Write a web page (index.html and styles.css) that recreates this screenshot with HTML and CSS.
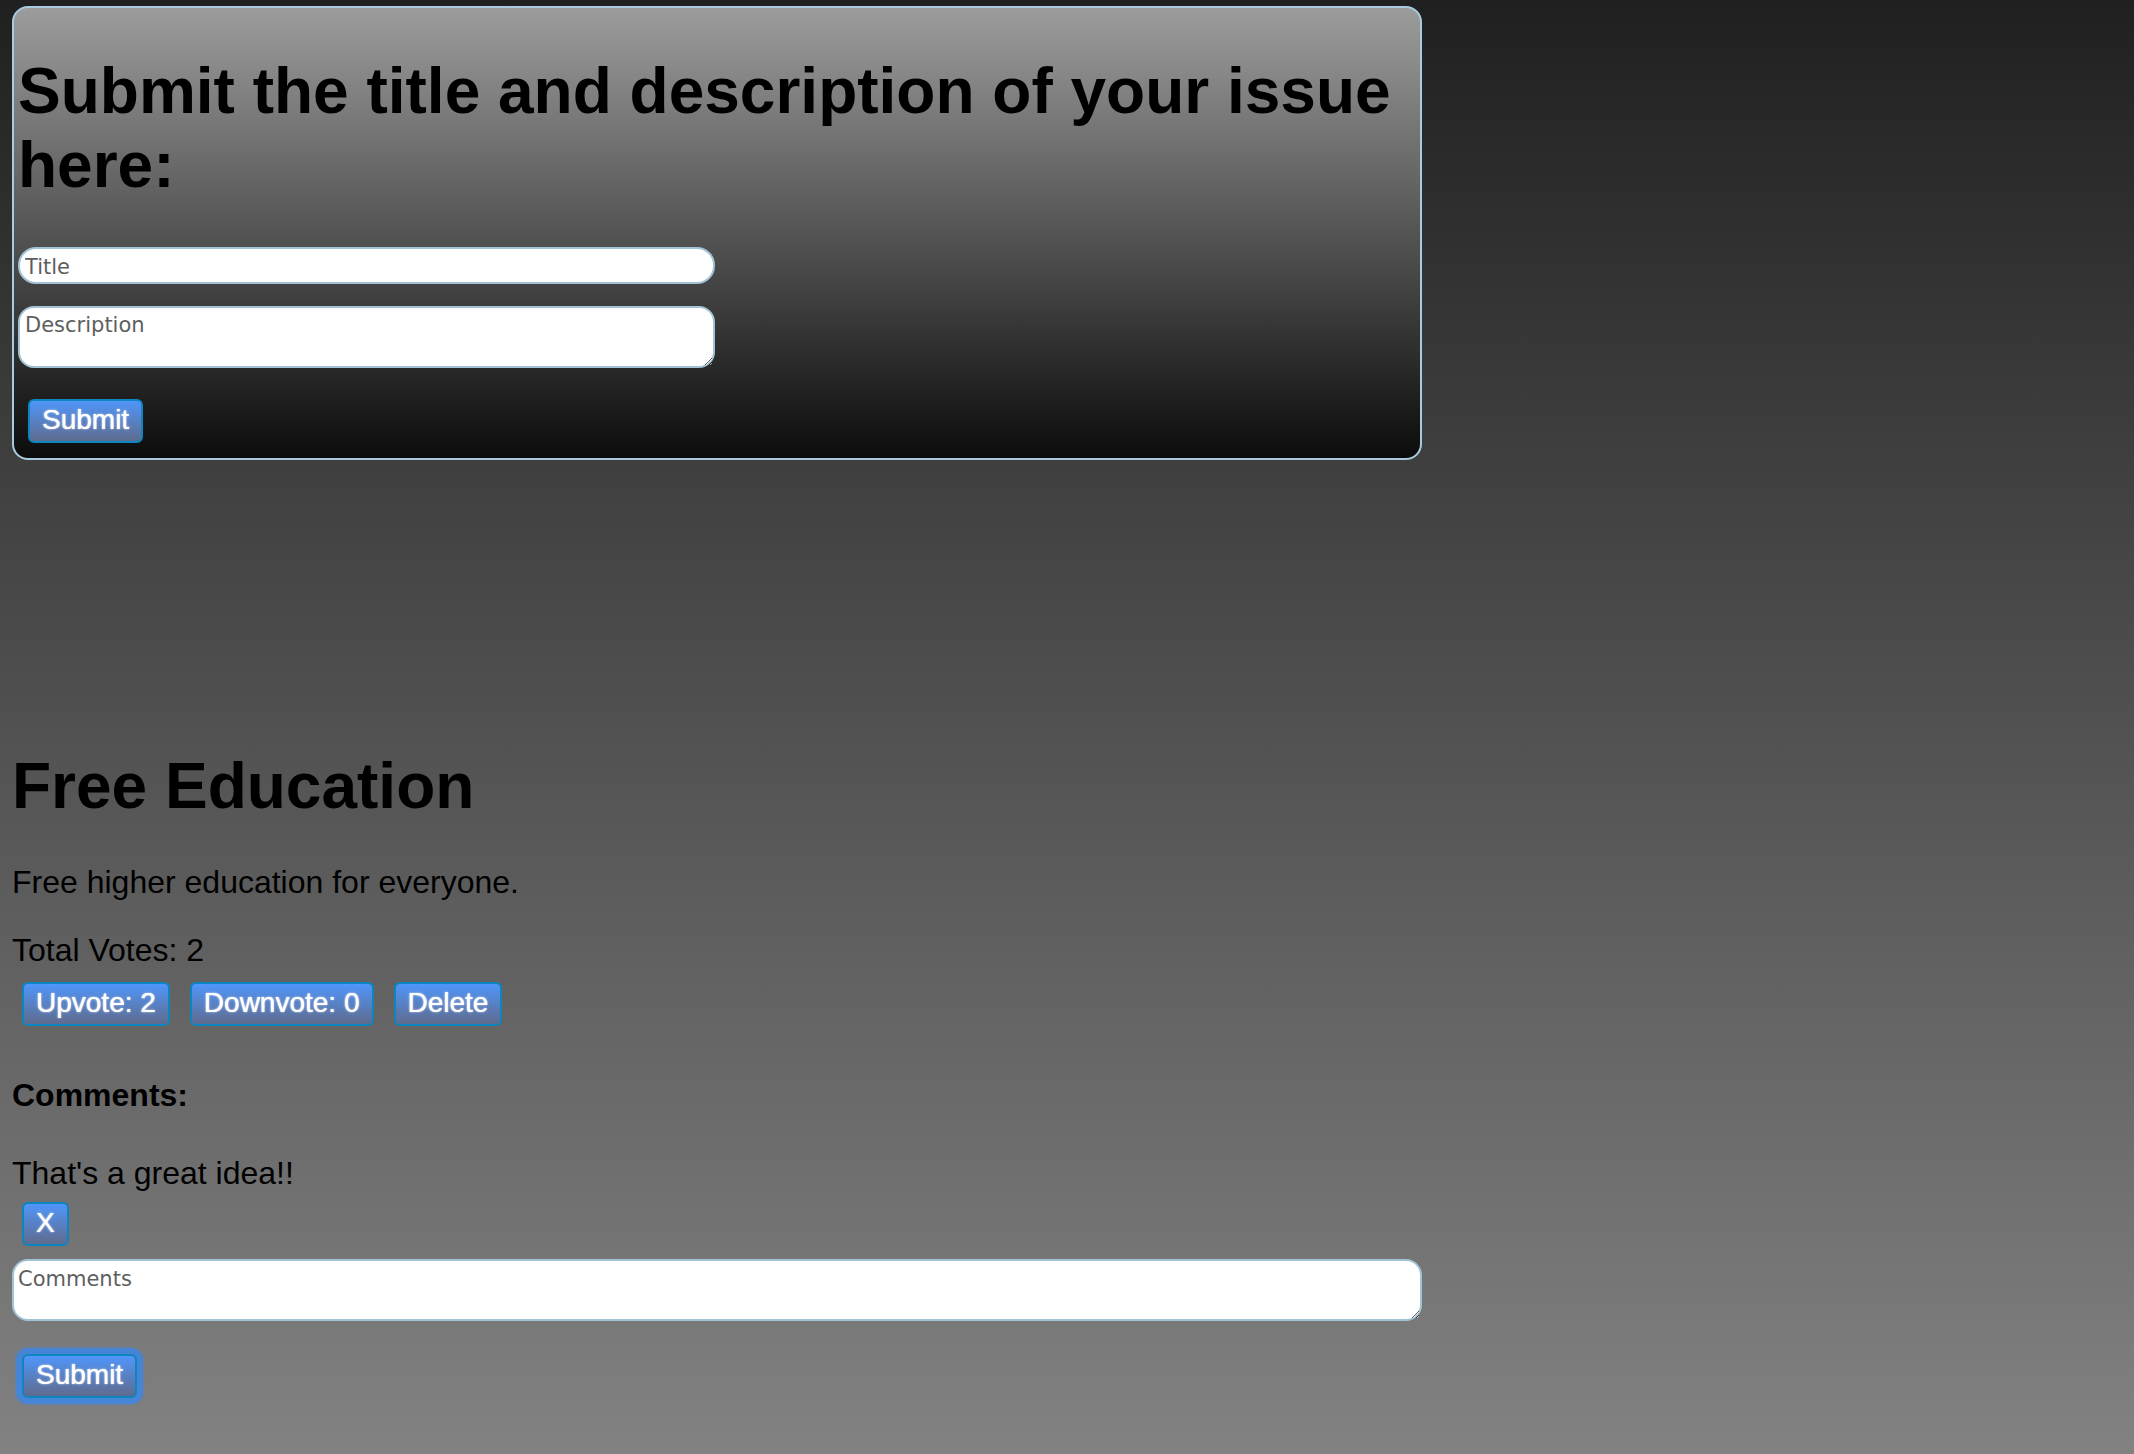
FILE: index.html
```html
<!DOCTYPE html>
<html lang="en">
<head>
<meta charset="utf-8">
<title>Issues</title>
<link rel="stylesheet" href="styles.css">
</head>
<body>
<div class="page">
  <form class="box">
    <h1 class="box-title">Submit the title and description of your issue here:</h1>
    <input class="field field-title" type="text" placeholder="Title">
    <textarea class="field field-desc" placeholder="Description"></textarea>
    <button type="button" class="btn btn-box">Submit</button>
  </form>

  <section class="issue">
    <h1 class="issue-title">Free Education</h1>
    <p class="issue-desc">Free higher education for everyone.</p>
    <p class="votes">Total Votes: 2</p>
    <div class="actions">
      <button type="button" class="btn">Upvote: 2</button>
      <button type="button" class="btn">Downvote: 0</button>
      <button type="button" class="btn">Delete</button>
    </div>
    <h4 class="comments-head">Comments:</h4>
    <p class="comment">That's a great idea!!</p>
    <button type="button" class="btn btn-x">X</button>
    <textarea class="field comment-field" placeholder="Comments"></textarea>
    <button type="button" class="btn btn-focus">Submit</button>
  </section>
</div>
</body>
</html>
```

FILE: styles.css
```css
html {
  height: 100%;
  background: linear-gradient(to bottom, #202020 0%, #828282 100%);
}

body {
  margin: 0;
  font-family: "Liberation Sans", Arial, Helvetica, sans-serif;
  color: #000;
}

.page {
  padding: 0 0 0 12px;
  display: flow-root;
}

/* ---------- top form box ---------- */
.box {
  box-sizing: border-box;
  width: 1410px;
  margin: 6px 0 0 0;
  padding: 3px 4px 15px 4px;
  border: 2px solid #a9cbe0;
  border-radius: 16px;
  background: linear-gradient(to bottom, #9c9c9c 0%, #0c0c0c 100%);
  display: flow-root;
}

.box-title {
  font-size: 64px;
  font-weight: bold;
  line-height: normal;
  margin: 43px 0 45px 0;
}

.field {
  display: block;
  box-sizing: border-box;
  margin: 0;
  border: 2px solid #a2c3d6;
  background: #fff;
  font-family: "DejaVu Sans", Verdana, sans-serif;
  font-size: 21px;
  color: #000;
  outline: none;
}

.field::placeholder {
  color: #5e5e5e;
  opacity: 1;
}

.field-title {
  width: 697px;
  height: 37px;
  padding: 2px 5px 0 5px;
  border-radius: 18px;
}

.field-desc {
  width: 697px;
  height: 62px;
  margin-top: 22px;
  padding: 5px 5px 4px 5px;
  border-radius: 16px;
  resize: both;
}

/* ---------- buttons ---------- */
.btn {
  display: block;
  box-sizing: border-box;
  height: 44px;
  margin: 0;
  padding: 3px 12px 5px 12px;
  border: 2px solid #0b86c1;
  border-radius: 6px;
  background: linear-gradient(to bottom, #5096fa 0%, #5f6b8e 100%);
  color: #fff;
  font-family: "Liberation Sans", Arial, Helvetica, sans-serif;
  font-size: 28px;
  line-height: 32px;
  text-shadow: 0 0 1px #fff, 0 0 3px rgba(255, 255, 255, 0.45);
  cursor: pointer;
}

.btn-box {
  margin: 31px 0 0 10px;
}

/* ---------- issue ---------- */
.issue {
  margin-top: 289px;
  padding-bottom: 40px;
}

.issue-title {
  font-size: 64px;
  font-weight: bold;
  line-height: normal;
  margin: 0 0 41px 0;
}

.issue-desc {
  font-size: 32px;
  line-height: normal;
  margin: 0;
}

.votes {
  font-size: 32px;
  line-height: normal;
  margin: 31px 0 0 0;
}

.actions {
  display: flex;
  gap: 20px;
  margin: 13px 0 0 10px;
}

.comments-head {
  font-size: 32px;
  font-weight: bold;
  line-height: normal;
  margin: 51px 0 41px 0;
}

.comment {
  font-size: 32px;
  line-height: normal;
  margin: 0;
}

.btn-x {
  margin: 10px 0 0 10px;
}

.comment-field {
  width: 1410px;
  height: 62px;
  margin-top: 13px;
  padding: 6px 4px 4px 4px;
  border-radius: 16px;
  resize: both;
}

.btn-focus {
  margin: 33px 0 0 10px;
  box-shadow: 0 0 0 6px rgba(62, 134, 228, 0.78), 0 0 2px 7px rgba(62, 134, 228, 0.35);
  border-radius: 6px;
}
```
